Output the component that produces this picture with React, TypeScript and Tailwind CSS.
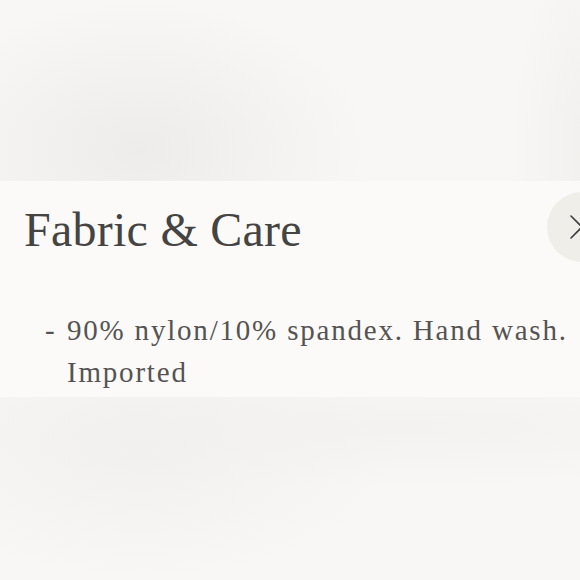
const details = ["90% nylon/10% spandex. Hand wash. Imported"];

function CloseIcon() {
  return (
    <svg width="24" height="24" viewBox="0 0 24 24" fill="none" stroke="currentColor" strokeWidth={1.6} strokeLinecap="round">
      <path d="M1 1l22 22M23 1L1 23" />
    </svg>
  );
}

export default function App() {
  return (
    <div className="flex h-[580px] w-full flex-col overflow-hidden bg-[#f9f7f6] font-['Liberation_Serif',serif]">
      {/* blurred backdrop above the sheet */}
      <div className="h-[181px] shrink-0 bg-[radial-gradient(ellipse_230px_150px_at_140px_150px,#eeecea,transparent),radial-gradient(ellipse_90px_220px_at_600px_150px,#f0efec,transparent)]" />

      <section className="shrink-0 bg-[#fbfaf9] pb-[4px] pt-[11px]">
        <div className="flex items-start justify-between pl-6">
          <h2 className="pt-[14px] text-[48px] leading-[48px] tracking-[0.25px] text-[#454443]">
            Fabric &amp; Care
          </h2>
          <button
            className="mr-[-37px] flex h-[70px] w-[70px] shrink-0 items-center justify-center rounded-full bg-[#efeee9] text-[#3f3f3f]"
            aria-label="Close"
          >
            <CloseIcon />
          </button>
        </div>

        <ul className="mt-[47px] pl-[45px] pr-2">
          {details.map((d) => (
            <li key={d} className="flex text-[29px] leading-[42px] tracking-[1.8px] text-[#555453]">
              <span className="w-[22px] shrink-0">-</span>
              <span>{d}</span>
            </li>
          ))}
        </ul>
      </section>

      <div className="flex-1 bg-[radial-gradient(ellipse_260px_130px_at_140px_50px,#f1f0ee,transparent),radial-gradient(ellipse_500px_60px_at_400px_30px,#f3f2f0,transparent)]" />
    </div>
  );
}
